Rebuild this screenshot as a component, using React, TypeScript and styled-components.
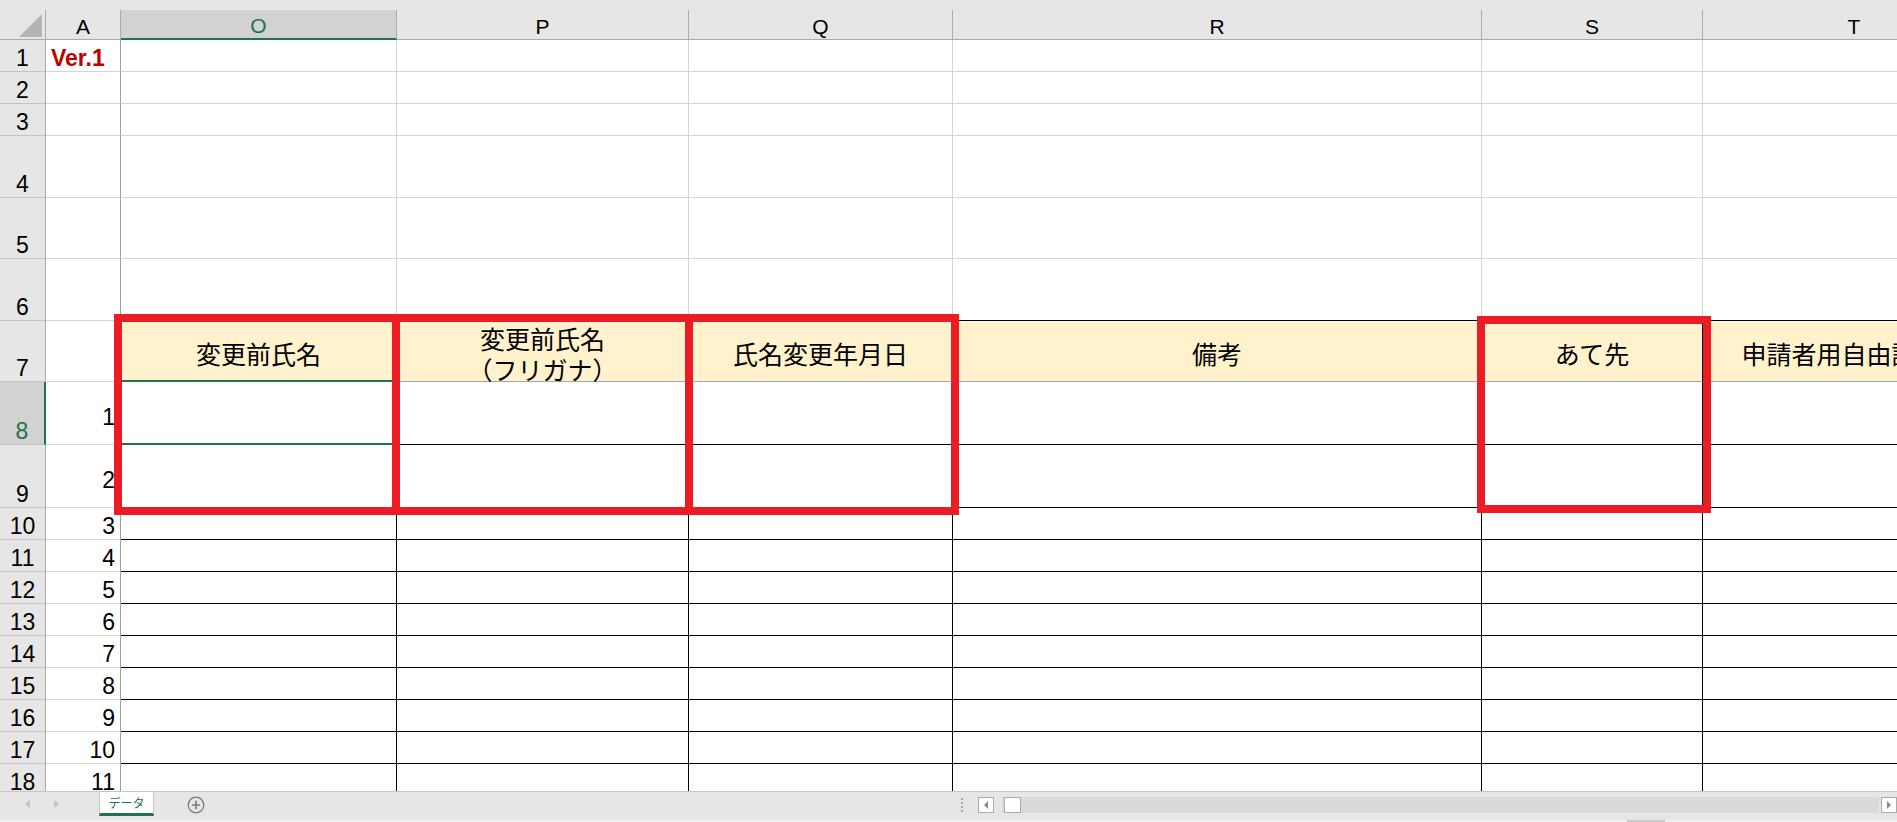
import React from "react";
import styled, { createGlobalStyle } from "styled-components";

const GREEN = "#217346";
const GRID = "#d4d4d4";
const HEAD_LINE = "#ababab";
const BLACK = "#000";
const RED = "#ed1c24";

const colWidths = [46, 75, 276, 292, 264, 529, 221, 303];
const rowHeights = [32, 32, 32, 62, 61, 62, 61, 63, 63, 32, 32, 32, 32, 32, 32, 32, 32, 32];
const letters = ["A", "O", "P", "Q", "R", "S", "T"];
const titles = [
  "変更前氏名",
  "変更前氏名\n（フリガナ）",
  "氏名変更年月日",
  "備考",
  "あて先",
  "申請者用自由記入欄",
];
// 赤枠 (x, y, w, h)
const callouts = [
  [114, 314, 286, 201],
  [392, 314, 301, 201],
  [685, 314, 274, 201],
  [1477, 316, 234, 197],
];

const GlobalStyle = createGlobalStyle`
  html, body {
    margin: 0;
    padding: 0;
    background: #fff;
    overflow: hidden;
  }
  body {
    font-family: "Liberation Sans", Arial, sans-serif;
  }
  * {
    box-sizing: border-box;
  }
`;

const Page = styled.div`
  width: 1897px;
  height: 822px;
  display: flex;
  flex-direction: column;
  overflow: hidden;
  background: #fff;
`;

const SheetArea = styled.div`
  position: relative;
  height: 791px;
  flex: none;
  overflow: hidden;
  background: #e6e6e6;
`;

const TopStrip = styled.div`
  height: 10px;
`;

const Grid = styled.div`
  display: grid;
  grid-template-columns: ${colWidths.map((w) => `${w}px`).join(" ")};
  grid-template-rows: 30px ${rowHeights.map((h) => `${h}px`).join(" ")};
  width: max-content;
  background: #fff;
`;

const Corner = styled.div`
  background: #e6e6e6;
  border-right: 1px solid ${HEAD_LINE};
  border-bottom: 1px solid ${HEAD_LINE};
  display: flex;
  align-items: flex-end;
  justify-content: flex-end;
  padding: 0 3px 2px 0;
  &::after {
    content: "";
    width: 0;
    height: 0;
    border-left: 23px solid transparent;
    border-bottom: 23px solid #b4b4b4;
  }
`;

const ColHeader = styled.div<{ $selected?: boolean }>`
  background: ${(p) => (p.$selected ? "#d2d2d2" : "#e6e6e6")};
  color: ${(p) => (p.$selected ? GREEN : "#000")};
  border-right: 1px solid ${HEAD_LINE};
  border-bottom: ${(p) => (p.$selected ? `2px solid ${GREEN}` : `1px solid ${HEAD_LINE}`)};
  display: flex;
  align-items: flex-end;
  justify-content: center;
  font-size: 21px;
  line-height: 24px;
`;

const RowHeader = styled.div<{ $selected?: boolean }>`
  background: ${(p) => (p.$selected ? "#d2d2d2" : "#e6e6e6")};
  color: ${(p) => (p.$selected ? GREEN : "#000")};
  border-right: ${(p) => (p.$selected ? `2px solid ${GREEN}` : `1px solid ${HEAD_LINE}`)};
  border-bottom: 1px solid #c4c4c4;
  display: flex;
  align-items: flex-end;
  justify-content: center;
  font-size: 23px;
  line-height: 26px;
`;

const IndexCell = styled.div<{ $middle?: boolean }>`
  border-right: 1px solid #9e9e9e;
  border-bottom: 1px solid ${GRID};
  display: flex;
  justify-content: flex-end;
  align-items: ${(p) => (p.$middle ? "center" : "flex-end")};
  padding: ${(p) => (p.$middle ? "8px 5px 0 0" : "0 5px 0 0")};
  font-size: 23px;
  line-height: 26px;
  color: #000;
`;

const Version = styled.span`
  margin-right: auto;
  padding-left: 5px;
  color: #c00000;
  font-weight: 700;
`;

const Cell = styled.div<{ $r?: string; $b?: string; $bw?: number }>`
  background: #fff;
  border-right: 1px solid ${(p) => p.$r ?? GRID};
  border-bottom: ${(p) => p.$bw ?? 1}px solid ${(p) => p.$b ?? GRID};
`;

const TitleCell = styled.div<{ $b: string; $bw: number }>`
  background: #fff2cc;
  border-right: 1px solid ${BLACK};
  border-bottom: ${(p) => p.$bw}px solid ${(p) => p.$b};
  display: flex;
  align-items: center;
  justify-content: center;
  padding-top: 5px;
  white-space: pre;
  text-align: center;
  font-family: "Noto Sans CJK JP", "Noto Sans", sans-serif;
  font-size: 25px;
  line-height: 31px;
  color: #000;
`;

const Callout = styled.div<{ $x: number; $y: number; $w: number; $h: number }>`
  position: absolute;
  left: ${(p) => p.$x}px;
  top: ${(p) => p.$y}px;
  width: ${(p) => p.$w}px;
  height: ${(p) => p.$h}px;
  border: 8px solid ${RED};
  pointer-events: none;
`;

const TabBar = styled.div`
  height: 29px;
  flex: none;
  display: flex;
  align-items: flex-start;
  background: #e6e6e6;
  border-top: 1px solid #c6c6c6;
`;

const TabNav = styled.div`
  width: 99px;
  height: 24px;
  display: flex;
  align-items: center;
  gap: 24px;
  padding: 0 0 0 25px;
`;

const NavArrow = styled.span<{ $dir: "left" | "right" }>`
  width: 0;
  height: 0;
  border-top: 4px solid transparent;
  border-bottom: 4px solid transparent;
  ${(p) =>
    p.$dir === "left"
      ? "border-right: 5px solid #c3c3c3;"
      : "border-left: 5px solid #c3c3c3;"}
`;

const SheetTab = styled.div`
  width: 55px;
  height: 24px;
  background: #fff;
  border-left: 1px solid #c6c6c6;
  border-right: 1px solid #c6c6c6;
  border-bottom: 3px solid ${GREEN};
  color: ${GREEN};
  display: flex;
  align-items: center;
  justify-content: center;
  font-family: "Noto Sans CJK JP", sans-serif;
  font-size: 12px;
  line-height: 16px;
`;

const AddSheet = styled.div`
  margin: 4px 0 0 33px;
  width: 18px;
  height: 18px;
  display: flex;
`;

const Spacer = styled.div`
  flex: 1;
`;

const ScrollZone = styled.div`
  width: 939px;
  height: 27px;
  display: flex;
  align-items: center;
  padding-bottom: 1px;
`;

const Splitter = styled.div`
  margin-left: 3px;
  width: 2px;
  height: 14px;
  border-left: 2px dotted #a8a8a8;
`;

const ScrollButton = styled.div<{ $dir: "left" | "right"; $gap: number }>`
  margin-left: ${(p) => p.$gap}px;
  width: 16px;
  height: 16px;
  flex: none;
  background: #fff;
  border: 1px solid ${HEAD_LINE};
  display: flex;
  align-items: center;
  justify-content: center;
  &::after {
    content: "";
    width: 0;
    height: 0;
    border-top: 4px solid transparent;
    border-bottom: 4px solid transparent;
    ${(p) =>
      p.$dir === "left"
        ? "border-right: 4px solid #8a8a8a;"
        : "border-left: 4px solid #8a8a8a;"}
  }
`;

const Track = styled.div`
  margin-left: 8px;
  flex: 1;
  height: 16px;
  background: #dadada;
  display: flex;
  padding-left: 2px;
`;

const Thumb = styled.div`
  width: 17px;
  height: 16px;
  background: #fff;
  border: 1px solid ${HEAD_LINE};
`;

const BottomStrip = styled.div`
  height: 2px;
  flex: none;
  background: #f0f0f0;
  padding-left: 1627px;
`;

const Grip = styled.div`
  width: 38px;
  height: 2px;
  background: #c8c8c8;
`;

const renderCell = (row: number, col: number) => {
  if (row <= 5) return <Cell key={col} />;
  if (row === 6) return <Cell key={col} $b={BLACK} />;
  if (row === 7)
    return (
      <TitleCell key={col} $b={col === 0 ? GREEN : "#a6a6a6"} $bw={col === 0 ? 2 : 1}>
        {titles[col]}
      </TitleCell>
    );
  if (row === 8)
    return <Cell key={col} $r={BLACK} $b={col === 0 ? GREEN : BLACK} $bw={col === 0 ? 2 : 1} />;
  return <Cell key={col} $r={BLACK} $b={BLACK} />;
};

export default function App() {
  return (
    <>
      <GlobalStyle />
      <Page>
        <SheetArea>
          <TopStrip />
          <Grid>
            <Corner />
            {letters.map((l) => (
              <ColHeader key={l} $selected={l === "O"}>
                {l}
              </ColHeader>
            ))}
            {rowHeights.map((_, i) => {
              const n = i + 1;
              return (
                <React.Fragment key={n}>
                  <RowHeader $selected={n === 8}>{n}</RowHeader>
                  <IndexCell $middle={n === 8 || n === 9}>
                    {n === 1 ? <Version>Ver.1</Version> : n >= 8 ? n - 7 : null}
                  </IndexCell>
                  {titles.map((_, c) => renderCell(n, c))}
                </React.Fragment>
              );
            })}
          </Grid>
          {callouts.map(([x, y, w, h], i) => (
            <Callout key={i} $x={x} $y={y} $w={w} $h={h} />
          ))}
        </SheetArea>
        <TabBar>
          <TabNav>
            <NavArrow $dir="left" />
            <NavArrow $dir="right" />
          </TabNav>
          <SheetTab>データ</SheetTab>
          <AddSheet>
            <svg width="18" height="18" viewBox="0 0 18 18">
              <circle cx="9" cy="9" r="7.8" fill="none" stroke="#7a7a7a" strokeWidth="1.3" />
              <path d="M9 4.8v8.4M4.8 9h8.4" stroke="#7a7a7a" strokeWidth="1.7" />
            </svg>
          </AddSheet>
          <Spacer />
          <ScrollZone>
            <Splitter />
            <ScrollButton $dir="left" $gap={15} />
            <Track>
              <Thumb />
            </Track>
            <ScrollButton $dir="right" $gap={2} />
          </ScrollZone>
        </TabBar>
        <BottomStrip>
          <Grip />
        </BottomStrip>
      </Page>
    </>
  );
}
